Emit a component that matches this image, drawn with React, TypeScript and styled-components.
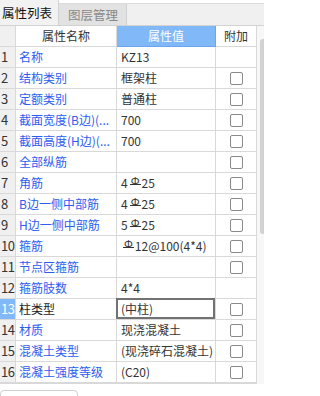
import React from "react";
import styled, { createGlobalStyle } from "styled-components";

interface iRow {
  name: string;
  value: string;
  rebar?: { before: string; after: string };
  check: boolean;
}

const rows: iRow[] = [
  { name: "名称", value: "KZ13", check: false },
  { name: "结构类别", value: "框架柱", check: true },
  { name: "定额类别", value: "普通柱", check: true },
  { name: "截面宽度(B边)(...", value: "700", check: true },
  { name: "截面高度(H边)(...", value: "700", check: true },
  { name: "全部纵筋", value: "", check: true },
  { name: "角筋", value: "", rebar: { before: "4", after: "25" }, check: true },
  { name: "B边一侧中部筋", value: "", rebar: { before: "4", after: "25" }, check: true },
  { name: "H边一侧中部筋", value: "", rebar: { before: "5", after: "25" }, check: true },
  { name: "箍筋", value: "", rebar: { before: "", after: "12@100(4*4)" }, check: true },
  { name: "节点区箍筋", value: "", check: true },
  { name: "箍筋肢数", value: "4*4", check: false },
  { name: "柱类型", value: "(中柱)", check: true },
  { name: "材质", value: "现浇混凝土", check: true },
  { name: "混凝土类型", value: "(现浇碎石混凝土)", check: true },
  { name: "混凝土强度等级", value: "(C20)", check: true },
];

const selected = 13;

const App: React.FC = () => {
  return (
    <>
      <GlobalStyle />
      <Panel>
        <TabBar>
          <Tab active>属性列表</Tab>
          <Tab>图层管理</Tab>
        </TabBar>
        <Body>
          <Grid>
            <Row>
              <NumCell />
              <HeadCell>属性名称</HeadCell>
              <HeadCell blue>属性值</HeadCell>
              <HeadCell>附加</HeadCell>
            </Row>
            {rows.map((r, i) => {
              const n = i + 1;
              const sel = n === selected;
              return (
                <Row key={n}>
                  <NumCell selected={sel}>{n}</NumCell>
                  <NameCell selected={sel}>{r.name}</NameCell>
                  <ValueCell focused={sel}>
                    {r.rebar ? (
                      <>
                        {r.rebar.before}
                        <Rebar>Φ</Rebar>
                        {r.rebar.after}
                      </>
                    ) : (
                      r.value
                    )}
                  </ValueCell>
                  <CheckCell>{r.check && <Box />}</CheckCell>
                </Row>
              );
            })}
          </Grid>
          <Track>
            <Thumb />
          </Track>
        </Body>
        <Footer>
          <FooterBox />
        </Footer>
      </Panel>
    </>
  );
};

export default App;

const GlobalStyle = createGlobalStyle`
  html, body {
    margin: 0;
    padding: 0;
    background: #ffffff;
    font-family: "Noto Sans CJK SC", "Noto Sans", sans-serif;
  }
`;

const Panel = styled.div`
  width: 264px;
  height: 396px;
  overflow: hidden;
  background: #ffffff;
  display: flex;
  flex-direction: column;
`;

const TabBar = styled.div`
  height: 21px;
  margin-top: 3px;
  display: flex;
  background: #f0f0f0;
  border-top: 1px solid #dadada;
  border-bottom: 1px solid #d2d2d2;
`;

const Tab = styled.div<{ active?: boolean }>`
  height: ${(p) => (p.active ? "25px" : "21px")};
  margin-top: ${(p) => (p.active ? "-4px" : "0")};
  display: flex;
  align-items: center;
  padding: ${(p) => (p.active ? "0 6px 0 2px" : "0 8px 0 9px")};
  font-size: 12.5px;
  color: ${(p) => (p.active ? "#111111" : "#888888")};
  background: ${(p) => (p.active ? "#f2f2f2" : "#e2e2e2")};
  border-right: 1px solid #d2d2d2;
  box-sizing: border-box;
`;

const Body = styled.div`
  display: flex;
`;

const Grid = styled.div`
  width: 257px;
  display: flex;
  flex-direction: column;
  border-bottom: 1px solid #d8d8d8;
`;

const Row = styled.div`
  display: grid;
  grid-template-columns: 16px 101px 99px 41px;
  height: 21px;
`;

const Cell = styled.div`
  box-sizing: border-box;
  height: 21px;
  border-right: 1px solid #d9d9d9;
  border-bottom: 1px solid #d9d9d9;
  font-size: 12px;
  line-height: 20px;
  white-space: nowrap;
  overflow: hidden;
`;

const NumCell = styled(Cell)<{ selected?: boolean }>`
  background: ${(p) => (p.selected ? "#80b8f8" : "#f0f0f0")};
  color: ${(p) => (p.selected ? "#ffffff" : "#333333")};
  font-size: 13px;
  letter-spacing: -0.5px;
  padding-left: 1px;
`;

const HeadCell = styled(Cell)<{ blue?: boolean }>`
  text-align: center;
  background: ${(p) => (p.blue ? "#80b8f8" : "#ffffff")};
  color: ${(p) => (p.blue ? "#ffffff" : "#333333")};
  border-color: ${(p) => (p.blue ? "#6aa6ef" : "#d9d9d9")};
`;

const NameCell = styled(Cell)<{ selected?: boolean }>`
  padding-left: 3px;
  color: ${(p) => (p.selected ? "#1a1a1a" : "#2c5cf0")};
`;

const ValueCell = styled(Cell)<{ focused?: boolean }>`
  padding-left: 4px;
  color: #333333;
  ${(p) =>
    p.focused &&
    `
    overflow: visible;
    position: relative;
    box-shadow: inset 0 0 0 2px #727272;
    margin-top: -1px;
    height: 22px;
    line-height: 22px;
    margin-left: -1px;
    padding-left: 5px;
  `}
`;

const Rebar = styled.span`
  display: inline-block;
  font-size: 11px;
  line-height: 8px;
  height: 8px;
  padding: 0 1px;
  margin: 0 1px 0 2px;
  border-bottom: 1px solid #333333;
  vertical-align: 3px;
`;

const CheckCell = styled(Cell)`
  display: flex;
  align-items: center;
  justify-content: center;
`;

const Box = styled.div`
  width: 13px;
  height: 13px;
  box-sizing: border-box;
  border: 1px solid #8a8a8a;
  border-radius: 2px;
  background: #ffffff;
`;

const Track = styled.div`
  flex: 1;
  background: #f7f7f7;
  padding-top: 13px;
  padding-left: 3px;
`;

const Thumb = styled.div`
  height: 195px;
  background: #d2d2d2;
  border-radius: 3px 0 0 3px;
`;

const Footer = styled.div`
  padding-top: 6px;
`;

const FooterBox = styled.div`
  width: 78px;
  height: 14px;
  box-sizing: border-box;
  border: 1px solid #cfcfcf;
  border-radius: 4px;
`;
